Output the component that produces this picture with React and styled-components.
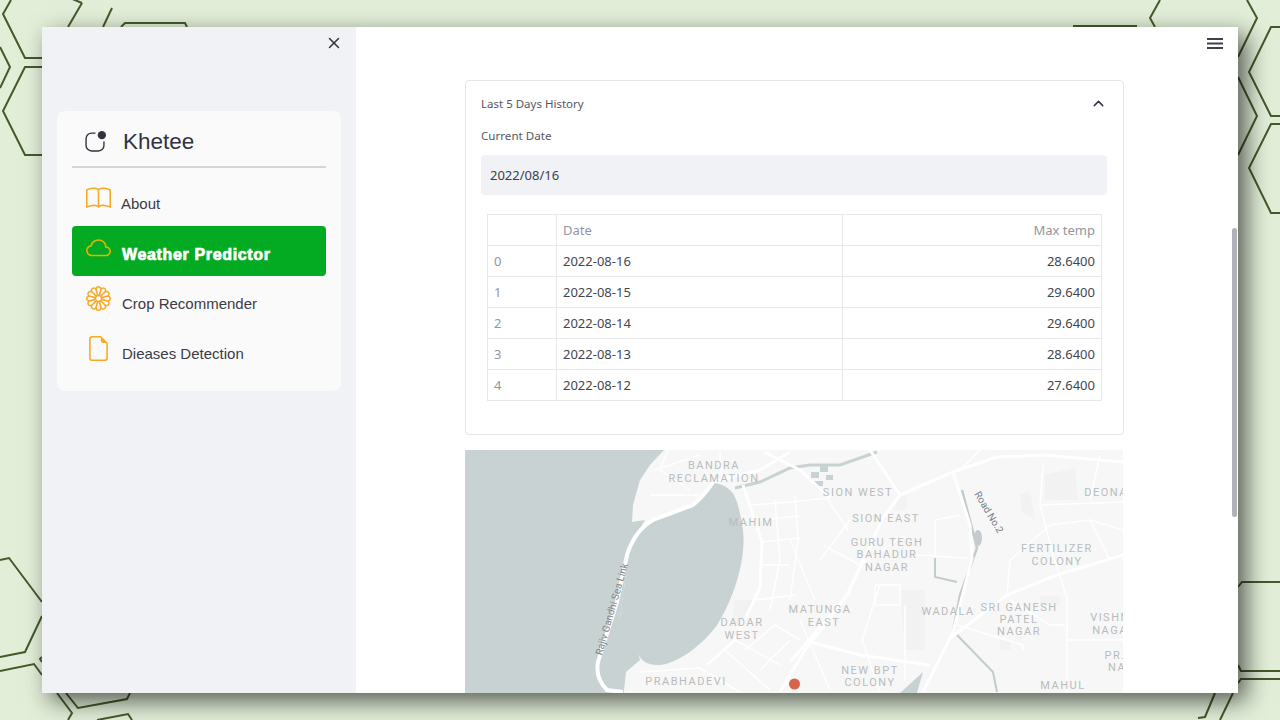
import React from 'react'
import styled, { createGlobalStyle } from 'styled-components'
import { X, ChevronUp } from 'lucide-react'
import { BsAppIndicator, BsBook, BsCloud, BsFlower1, BsFileEarmark } from 'react-icons/bs'

const GlobalStyle = createGlobalStyle`
  html, body {
    margin: 0;
    padding: 0;
    overflow: hidden;
  }
`

const Page = styled.div`
  position: relative;
  box-sizing: border-box;
  width: 1280px;
  height: 720px;
  padding: 27px 42px;
  background: #e2eed8;
  overflow: hidden;
`

const Pattern = styled.svg`
  position: absolute;
  inset: 0;
`

const Window = styled.div`
  position: relative;
  display: flex;
  height: 666px;
  box-shadow: 8px 8px 22px rgba(0, 0, 0, 0.62);
`

const Sidebar = styled.aside`
  box-sizing: border-box;
  width: 314px;
  flex-shrink: 0;
  padding: 0 15px;
  background: #f0f2f6;
`

const CloseRow = styled.div`
  display: flex;
  justify-content: flex-end;
  height: 84px;
  padding-top: 7px;
  box-sizing: border-box;
  margin-right: -2px;
  color: #31333f;
`

const MenuCard = styled.nav`
  box-sizing: border-box;
  height: 280px;
  padding: 15px;
  background: #fafafa;
  border-radius: 8px;
  font-family: "Liberation Sans", Arial, sans-serif;
  color: #3a3c47;
`

const Brand = styled.div`
  display: flex;
  align-items: center;
  box-sizing: border-box;
  height: 42px;
  padding: 0 0 8px 12px;
  font-size: 22.5px;
  gap: 17px;
  color: #31333f;
  border-bottom: 2px solid #d6d6d6;
`

const MenuList = styled.div`
  display: flex;
  flex-direction: column;
  margin-top: 8px;
`

const MenuItem = styled.div`
  display: flex;
  align-items: center;
  height: 50px;
  padding-left: 14px;
  gap: ${p => p.$gap}px;
  border-radius: 4px;
  font-size: ${p => (p.$active ? 16 : 15)}px;
  background: ${p => (p.$active ? '#02ab21' : 'transparent')};
  color: ${p => (p.$active ? '#fff' : '#3a3c47')};
  font-weight: ${p => (p.$active ? 700 : 400)};
  letter-spacing: ${p => (p.$active ? '0.65px' : '0')};
  -webkit-text-stroke: ${p => (p.$active ? '0.7px #fff' : '0')};

  svg {
    flex-shrink: 0;
    margin-bottom: 5px;
    color: ${p => (p.$active ? '#e8b100' : '#f9a825')};
  }

  span {
    padding-top: ${p => (p.$active ? 7 : 4)}px;
  }
`

const Main = styled.main`
  position: relative;
  flex: 1;
  display: flex;
  flex-direction: column;
  gap: 15px;
  padding: 53px 0 0 109px;
  background: #fff;
  overflow: hidden;
  font-family: "Noto Sans", "Open Sans", sans-serif;
  color: #3c3e49;
`

const MenuButton = styled.svg`
  position: absolute;
  top: 11px;
  right: 15px;
`

const Scrollbar = styled.div`
  position: absolute;
  top: 201px;
  right: 1px;
  width: 5px;
  height: 289px;
  border-radius: 3px;
  background: #b1b2b9;
`

const Expander = styled.section`
  box-sizing: border-box;
  width: 659px;
  height: 355px;
  padding: 0 16px 0 15px;
  flex-shrink: 0;
  border: 1px solid #e4e6ea;
  border-radius: 4px;
`

const ExpanderHead = styled.div`
  display: flex;
  align-items: center;
  justify-content: space-between;
  height: 44px;
  font-size: 11.5px;
  color: #55575f;
`

const FieldLabel = styled.div`
  margin-top: 1px;
  height: 20px;
  line-height: 20px;
  font-size: 11.6px;
  color: #55575f;
`

const DateInput = styled.div`
  box-sizing: border-box;
  height: 40px;
  margin-top: 9px;
  padding-left: 9px;
  line-height: 40px;
  font-size: 13px;
  background: #f0f2f6;
  border-radius: 4px;
`

const Table = styled.table`
  width: 614px;
  margin: 19px 0 0 6px;
  border-collapse: collapse;
  table-layout: fixed;
  font-size: 13px;
`

const Cell = styled.td`
  box-sizing: border-box;
  height: 31px;
  padding: 0 6px;
  border: 1px solid #e6e8ec;
  text-align: ${p => (p.$right ? 'right' : 'left')};
  color: ${p => (p.$muted ? '#94969d' : '#44464f')};
`

const MapBox = styled.svg`
  display: block;
  flex-shrink: 0;
`

const Label = styled.text`
  font-family: Roboto, "Liberation Sans", sans-serif;
  font-size: 11px;
  letter-spacing: 1.5px;
  fill: #b9bcbd;
  text-anchor: middle;
`

const RoadLabel = styled.text`
  font-family: Roboto, "Liberation Sans", sans-serif;
  font-size: 10px;
  fill: #7c8285;
  text-anchor: middle;
`

const hexLines = [
  '82,3 70,-2',
  '82,3 68,27',
  '11,0 3,14 25,58 42,58',
  '0,47 10,67 0,88',
  '42,67 25,67 3,111 25,155 42,155',
  '103,27 112,8',
  '121,27 125,23 185,23 187,27',
  '0,560 9,558 42,602',
  '42,616 25,652 0,657',
  '0,671 34,664 42,675',
  '42,657 40,659 42,662',
  '57,693 72,713 68,720',
  '66,693 78,708 127,699 130,693',
  '97,720 128,714 132,720',
  '1073,26 1137,26',
  '1160,0 1150,18 1155,27',
  '1247,0 1257,18 1238,57',
  '1238,77 1257,116 1238,155',
  '1280,27 1271,27 1249,72 1271,116 1280,116',
  '1280,124 1271,124 1249,168 1271,213 1280,213',
  '1280,582 1242,582 1238,587',
  '1238,665 1241,671 1280,671',
  '1280,679 1241,679 1238,683',
  '1215,693 1205,717 1198,718',
  '1233,693 1220,720',
]

const mainRoads = [
  '847,595 883,518 900,495 953,472 997,457 1043,455 1123,462',
  '953,472 970,525 972,558 953,632 923,692',
  '950,638 1007,595 1057,575 1123,555',
  '743,485 762,542 760,588 735,640 707,665',
  '847,595 805,650 780,692',
  '790,662 850,592',
  '810,642 860,655 930,665',
  '713,482 760,470 790,452',
  '764,452 800,470 830,498',
  '900,495 870,450',
]

const minorRoads = [
  '790,502 827,498 848,530',
  '1040,505 1123,502',
  '1043,465 1040,505 1053,555 1067,598 1067,692',
  '823,545 860,565',
  '917,555 967,558',
  '957,625 1023,645 1023,650',
  '880,585 862,640 880,692',
  '752,505 790,502',
  '760,520 800,516',
  '762,542 800,538',
  '762,565 790,565',
  '755,600 795,595',
  '735,640 780,665',
  '725,650 770,690',
  '640,672 700,668 740,692',
  '775,500 780,560 770,610',
  '795,495 798,540 790,600',
  '745,650 775,625 800,640',
  '760,670 790,640',
  '935,520 960,515',
  '935,520 935,558',
  '1007,595 1010,560 1050,525 1090,520 1123,530',
  '1090,520 1110,560',
  '875,585 875,605 900,605 900,585 875,585',
  '655,470 700,455',
  '650,495 700,495',
  '668,450 660,470 690,490',
  '720,452 722,482',
  '790,540 815,600',
  '800,620 830,690',
  '1067,640 1123,640',
  '1010,600 1050,625 1065,625',
  '980,450 960,470',
  '820,560 850,520',
  '860,565 905,535',
  '905,605 905,680',
  '1090,500 1100,455',
]

const patches = [
  '1045,475 1075,468 1078,500 1045,500',
  '897,498 908,495 905,510 895,510',
  '1020,495 1030,490 1035,520 1022,512',
  '900,590 925,590 925,650 905,650',
  '735,600 755,600 745,625 732,625',
  '1040,596 1060,596 1060,605 1040,605',
  '1000,640 1010,640 1010,650 1000,650',
]

const mapLabels = [
  ['BANDRA', 714, 469],
  ['RECLAMATION', 714, 482],
  ['MAHIM', 751, 526],
  ['DADAR', 742, 626],
  ['WEST', 742, 639],
  ['PRABHADEVI', 686, 685],
  ['SION WEST', 858, 496],
  ['SION EAST', 886, 522],
  ['GURU TEGH', 887, 546],
  ['BAHADUR', 887, 558],
  ['NAGAR', 887, 571],
  ['MATUNGA', 820, 613],
  ['EAST', 824, 626],
  ['WADALA', 948, 615],
  ['SRI GANESH', 1019, 611],
  ['PATEL', 1019, 623],
  ['NAGAR', 1019, 635],
  ['FERTILIZER', 1057, 552],
  ['COLONY', 1057, 565],
  ['NEW BPT', 870, 674],
  ['COLONY', 870, 686],
  ['DEONA', 1106, 496],
  ['VISHN', 1110, 621],
  ['NAGA', 1110, 634],
  ['PR.', 1115, 659],
  ['NA', 1117, 671],
  ['MAHUL', 1063, 689],
]

const rows = [
  ['0', '2022-08-16', '28.6400'],
  ['1', '2022-08-15', '29.6400'],
  ['2', '2022-08-14', '29.6400'],
  ['3', '2022-08-13', '28.6400'],
  ['4', '2022-08-12', '27.6400'],
]

const menu = [
  { name: 'About', Icon: BsBook, gap: 10 },
  { name: 'Weather Predictor', Icon: BsCloud, gap: 11, active: true },
  { name: 'Crop Recommender', Icon: BsFlower1, gap: 11 },
  { name: 'Dieases Detection', Icon: BsFileEarmark, gap: 11 },
]

const CityMap = () => (
  <MapBox width="658" height="250" viewBox="465 450 658 250">
    <rect x="465" y="450" width="658" height="250" fill="#f6f7f6" />
    {patches.map(p => <polygon key={p} points={p} fill="#f1f2f1" />)}
    <polygon
      points="465,450 664,450 650,465 640,480 633,505 632,522 645,520 630,545 620,618 634,640 640,660 626,672 623,700 465,700"
      fill="#c9d2d3"
    />
    <path
      d="M713 483 C725 484 733 490 737 502 C742 520 745 535 743 550 C741 575 730 605 717 625 C705 642 680 663 660 665 C648 666 638 660 636 648 C632 635 625 628 620 618 L630 545 C635 532 645 525 653 520 L693 505 Z"
      fill="#c9d2d3"
    />
    <polyline points="735,488 760,482 790,468 810,465 840,465 877,452" fill="none" stroke="#c9d2d3" strokeWidth="3" />
    <polyline points="962,490 972,528 977,548 960,595 953,632" fill="none" stroke="#c3cccd" strokeWidth="2.5" />
    <ellipse cx="978" cy="538" rx="4" ry="8" fill="#c3cccd" />
    <polyline points="935,558 935,577 957,582" fill="none" stroke="#c3cccd" strokeWidth="2" />
    <polyline points="957,635 993,672 997,692" fill="none" stroke="#c3cccd" strokeWidth="2" />
    <polygon points="900,693 923,672 917,693" fill="#c9d2d3" />
    <g fill="#c9d2d3">
      <rect x="811" y="472" width="8" height="6" />
      <rect x="820" y="466" width="8" height="6" />
      <rect x="826" y="475" width="7" height="5" />
      <rect x="814" y="481" width="9" height="5" />
    </g>
    {minorRoads.map(p => <polyline key={p} points={p} fill="none" stroke="#fff" strokeWidth="1.5" />)}
    {mainRoads.map(p => <polyline key={p} points={p} fill="none" stroke="#fff" strokeWidth="3" />)}
    <path
      d="M713 482 Q705 495 693 505 L653 520 Q635 530 627 555 L617 602 L598 662 Q595 678 607 690 L623 692"
      fill="none"
      stroke="#fff"
      strokeWidth="4"
    />
    {mapLabels.map(([text, x, y]) => <Label key={text + x} x={x} y={y}>{text}</Label>)}
    <RoadLabel transform="translate(615 610) rotate(-74)">Rajiv Gandhi Sea Link</RoadLabel>
    <RoadLabel transform="translate(986 514) rotate(59)">Road No.2</RoadLabel>
    <circle cx="794.5" cy="684" r="5.5" fill="#d9644c" />
  </MapBox>
)

const App = () => (
  <Page>
    <GlobalStyle />
    <Pattern width="1280" height="720" viewBox="0 0 1280 720">
      {hexLines.map(p => <polyline key={p} points={p} fill="none" stroke="#435a2b" strokeWidth="2" />)}
    </Pattern>
    <Window>
      <Sidebar>
        <CloseRow><X size={18} strokeWidth={2} /></CloseRow>
        <MenuCard>
          <Brand>
            <BsAppIndicator size={22} />
            Khetee
          </Brand>
          <MenuList>
            {menu.map(({ name, Icon, gap, active }) => (
              <MenuItem key={name} $gap={gap} $active={active}>
                <Icon size={25} />
                <span>{name}</span>
              </MenuItem>
            ))}
          </MenuList>
        </MenuCard>
      </Sidebar>
      <Main>
        <MenuButton width="16" height="12" viewBox="0 0 16 12" fill="#3f404c">
          <rect y="0" width="16" height="2" />
          <rect y="4.5" width="16" height="2" />
          <rect y="9" width="16" height="2" />
        </MenuButton>
        <Scrollbar />
        <Expander>
          <ExpanderHead>
            Last 5 Days History
            <ChevronUp size={17} strokeWidth={2} color="#31333f" />
          </ExpanderHead>
          <FieldLabel>Current Date</FieldLabel>
          <DateInput>2022/08/16</DateInput>
          <Table>
            <colgroup>
              <col width="69" />
              <col width="286" />
              <col width="259" />
            </colgroup>
            <tbody>
              <tr>
                <Cell />
                <Cell $muted>Date</Cell>
                <Cell $muted $right>Max temp</Cell>
              </tr>
              {rows.map(([index, date, temp]) => (
                <tr key={index}>
                  <Cell $muted>{index}</Cell>
                  <Cell>{date}</Cell>
                  <Cell $right>{temp}</Cell>
                </tr>
              ))}
            </tbody>
          </Table>
        </Expander>
        <CityMap />
      </Main>
    </Window>
  </Page>
)

export default App
